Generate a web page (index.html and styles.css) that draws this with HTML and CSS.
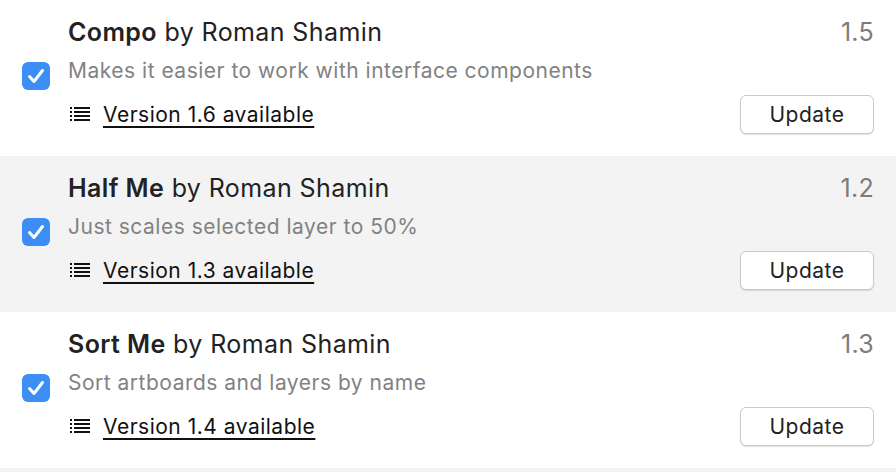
FILE: index.html
```html
<!DOCTYPE html>
<html>
<head>
<meta charset="utf-8">
<link rel="stylesheet" href="styles.css">
</head>
<body>
<div class="list">
  <div class="row">
    <div class="check"><svg viewBox="0 0 28 28" width="28" height="28"><path d="M7.5 14.5 L12 19.5 L20.5 8.5" fill="none" stroke="#fff" stroke-width="3" stroke-linecap="round" stroke-linejoin="round"/></svg></div>
    <div class="content">
      <div class="head"><span class="title"><b>Compo</b> by Roman Shamin</span><span class="ver">1.5</span></div>
      <div class="desc">Makes it easier to work with interface components</div>
      <div class="foot">
        <span class="notes"><svg class="lines" viewBox="0 0 20 14" width="20" height="14"><g fill="#111"><rect x="0" y="0" width="2" height="2"/><rect x="0" y="4" width="2" height="2"/><rect x="0" y="8" width="2" height="2"/><rect x="0" y="12" width="2" height="2"/><rect x="4" y="0" width="16" height="2"/><rect x="4" y="4" width="16" height="2"/><rect x="4" y="8" width="16" height="2"/><rect x="4" y="12" width="16" height="2"/></g></svg><a class="link">Version 1.6 available</a></span>
        <button class="btn">Update</button>
      </div>
    </div>
  </div>
  <div class="row alt">
    <div class="check"><svg viewBox="0 0 28 28" width="28" height="28"><path d="M7.5 14.5 L12 19.5 L20.5 8.5" fill="none" stroke="#fff" stroke-width="3" stroke-linecap="round" stroke-linejoin="round"/></svg></div>
    <div class="content">
      <div class="head"><span class="title"><b>Half Me</b> by Roman Shamin</span><span class="ver">1.2</span></div>
      <div class="desc">Just scales selected layer to 50%</div>
      <div class="foot">
        <span class="notes"><svg class="lines" viewBox="0 0 20 14" width="20" height="14"><g fill="#111"><rect x="0" y="0" width="2" height="2"/><rect x="0" y="4" width="2" height="2"/><rect x="0" y="8" width="2" height="2"/><rect x="0" y="12" width="2" height="2"/><rect x="4" y="0" width="16" height="2"/><rect x="4" y="4" width="16" height="2"/><rect x="4" y="8" width="16" height="2"/><rect x="4" y="12" width="16" height="2"/></g></svg><a class="link">Version 1.3 available</a></span>
        <button class="btn">Update</button>
      </div>
    </div>
  </div>
  <div class="row">
    <div class="check"><svg viewBox="0 0 28 28" width="28" height="28"><path d="M7.5 14.5 L12 19.5 L20.5 8.5" fill="none" stroke="#fff" stroke-width="3" stroke-linecap="round" stroke-linejoin="round"/></svg></div>
    <div class="content">
      <div class="head"><span class="title"><b>Sort Me</b> by Roman Shamin</span><span class="ver">1.3</span></div>
      <div class="desc">Sort artboards and layers by name</div>
      <div class="foot">
        <span class="notes"><svg class="lines" viewBox="0 0 20 14" width="20" height="14"><g fill="#111"><rect x="0" y="0" width="2" height="2"/><rect x="0" y="4" width="2" height="2"/><rect x="0" y="8" width="2" height="2"/><rect x="0" y="12" width="2" height="2"/><rect x="4" y="0" width="16" height="2"/><rect x="4" y="4" width="16" height="2"/><rect x="4" y="8" width="16" height="2"/><rect x="4" y="12" width="16" height="2"/></g></svg><a class="link">Version 1.4 available</a></span>
        <button class="btn">Update</button>
      </div>
    </div>
  </div>
  <div class="row alt tail"></div>
</div>
</body>
</html>
```
FILE: styles.css
```css
* { box-sizing: border-box; }
html, body { margin: 0; padding: 0; background: #fff; }
body { font-family: Inter, "Noto Sans", sans-serif; color: #222; width: 896px; height: 472px; overflow: hidden; }
.list { display: flex; flex-direction: column; }
.row { height: 156px; display: flex; align-items: flex-start; padding: 14px 22px 0 22px; background: #fff; }
.row.alt { background: #f3f3f3; }
.row.tail { height: 4px; padding: 0; }
.check { width: 28px; height: 28px; margin-top: 48px; border-radius: 6px; background: #3c8ef5; flex: none; }
.check svg { display: block; }
.content { flex: 1; margin-left: 18px; }
.head { display: flex; justify-content: space-between; align-items: center; height: 36px; }
.title { font-size: 25px; letter-spacing: 0.4px; color: #222; }
.title b { font-weight: 600; }
.ver { font-size: 25px; color: #7c7c7c; letter-spacing: 0.3px; }
.desc { height: 42px; line-height: 42px; font-size: 21px; letter-spacing: 0.5px; color: #828282; }
.foot { height: 44px; display: flex; justify-content: space-between; align-items: center; }
.notes { display: flex; align-items: center; padding-left: 2px; }
.lines { margin-right: 13px; }
.link { font-size: 21px; letter-spacing: 0.5px; color: #111; text-decoration: underline; text-underline-offset: 4px; text-decoration-thickness: 2px; }
.btn { width: 134px; height: 39px; margin-right: 0; border: 1px solid #c9c9c9; border-radius: 6px; background: #fff; font-family: inherit; font-size: 21px; letter-spacing: 0.5px; color: #222; box-shadow: 0 1px 1px rgba(0,0,0,0.12); padding: 0; }
```
